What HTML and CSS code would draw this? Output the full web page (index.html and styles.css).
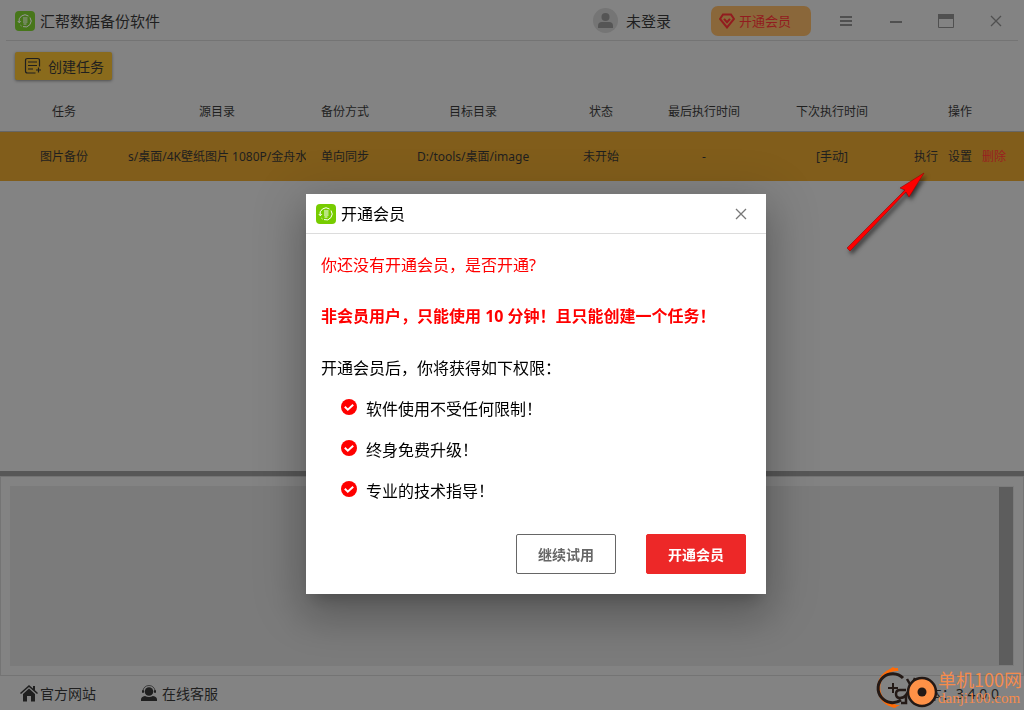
FILE: index.html
```
<!DOCTYPE html>
<html lang="zh-CN">
<head>
<meta charset="utf-8">
<title>汇帮数据备份软件</title>
<link rel="stylesheet" href="styles.css">
</head>
<body>
<svg class="defs" aria-hidden="true">
  <symbol id="logo" viewBox="0 0 20 20">
    <rect width="20" height="20" rx="4" fill="currentColor"/>
    <g fill="none" stroke="var(--logo-line)" stroke-width="1">
      <path d="M4.200 11.500A6 6 0 0 1 13.500 5M15 6.500A6 6 0 0 1 8 15.600M5.500 14.200l1 .8"/>
      <path d="M2.800 10l1.500 1.800 1.600-1.600M8 7h4.500M8 9h4.500M8 11h4.500M8.500 13h3"/>
    </g>
  </symbol>
  <symbol id="close" viewBox="0 0 12 12">
    <path d="M1 1l10 10M11 1L1 11" fill="none" stroke="currentColor" stroke-width="1.300"/>
  </symbol>
  <symbol id="check" viewBox="0 0 16 16">
    <circle cx="8" cy="8" r="8" fill="currentColor"/>
    <path d="M3.800 7.800l3 2.900 5.400-5" fill="none" stroke="#fff" stroke-width="2"/>
  </symbol>
</svg>

<div class="app">
  <header class="titlebar">
    <svg class="logo logo-dim"><use href="#logo"/></svg>
    <h1 class="app-name">汇帮数据备份软件</h1>
    <button class="account">
      <svg width="25" height="25" viewBox="0 0 25 25"><circle cx="12.500" cy="12.500" r="12.500" fill="#757575"/><circle cx="12.500" cy="9" r="4" fill="#555"/><path d="M5 20v-2q0-4 4-4h7q4 0 4 4v2z" fill="#555"/></svg>
      未登录
    </button>
    <button class="vip">
      <svg width="16" height="16" viewBox="0 0 16 16" fill="none" stroke="currentColor" stroke-width="2"><path d="M4 1.500h8L15 6l-7 8.500L1 6z"/><path d="M5 5.800l3 3.400 3-3.400"/></svg>
      开通会员
    </button>
    <div class="window-buttons">
      <button class="win-btn" aria-label="菜单"><svg width="12" height="12" viewBox="0 0 12 12" fill="currentColor"><path d="M0 1h12v2H0zM0 5h12v2H0zM0 9h12v2H0z"/></svg></button>
      <button class="win-btn" aria-label="最小化"><svg width="12" height="12" viewBox="0 0 12 12"><path d="M0 6h12v2H0z" fill="currentColor"/></svg></button>
      <button class="win-btn" aria-label="最大化"><svg width="16" height="14" viewBox="0 0 16 14"><path d="M.5.5h15v13H.5z" fill="none" stroke="currentColor"/><path d="M0 0h16v5H0z" fill="currentColor"/></svg></button>
      <button class="win-btn" aria-label="关闭"><svg width="12" height="12"><use href="#close"/></svg></button>
    </div>
  </header>

  <div class="toolbar">
    <button class="create">
      <svg width="18" height="18" viewBox="0 0 18 18" fill="none" stroke="currentColor" stroke-width="1.200"><path d="M15.500 9.500V3.500q0-2-2-2H3.500q-2 0-2 2v10.500q0 2 2 2h8M4 5h9M4 8.500h9M4 12h5M14.500 10.500v5M12 13h5"/></svg>
      创建任务
    </button>
  </div>

  <main class="tasks">
    <table class="task-table">
      <colgroup><col class="w-m"><col class="w-l"><col class="w-s"><col class="w-l"><col class="w-s"><col class="w-m"><col class="w-m"><col class="w-m"></colgroup>
      <thead>
        <tr><th>任务</th><th>源目录</th><th>备份方式</th><th>目标目录</th><th>状态</th><th>最后执行时间</th><th>下次执行时间</th><th>操作</th></tr>
      </thead>
      <tbody>
        <tr>
          <td>图片备份</td><td class="path">s/桌面/4K壁纸图片 1080P/金舟水</td><td>单向同步</td><td>D:/tools/桌面/image</td><td>未开始</td><td>-</td><td>[手动]</td>
          <td><div class="actions"><button>执行</button><button>设置</button><button class="danger">删除</button></div></td>
        </tr>
      </tbody>
    </table>
  </main>

  <div class="splitter"></div>
  <section class="log-panel"><div class="log"><div class="scrollbar"></div></div></section>

  <footer class="footer">
    <a class="foot-link" href="#">
      <svg width="18" height="17" viewBox="0 0 18 17" fill="currentColor"><path d="M9 0L0 8l1 1 8-7 8 7 1-1-3-2.800V1h-2v2.500z"/><path d="M9 3.500L3 9v7.500h4V11h4v5.500h4V9z"/></svg>
      官方网站
    </a>
    <a class="foot-link support" href="#">
      <svg width="16" height="17" viewBox="0 0 16 17" fill="currentColor"><circle cx="8" cy="6.500" r="4.300"/><path d="M0 16v-1.500q0-3 4-3.500 4 2 8 0 4 .5 4 3.500V16z"/><path d="M2 6a6 5.500 0 0 1 12 0" fill="none" stroke="currentColor" stroke-width=".7"/><rect x="1" y="5" width="2" height="3" rx="1"/><rect x="13" y="5" width="2" height="3" rx="1"/></svg>
      在线客服
    </a>
    <span class="version">版本：3.4.0.0</span>
  </footer>
</div>

<svg class="arrow" width="90" height="90" viewBox="0 0 90 90" aria-hidden="true"><path d="M5 87L2 84 60 26l-5-2 24-15-15 24-3-5z" fill="#f00" stroke="#900" stroke-width=".6"/></svg>

<div class="watermark" aria-hidden="true">
  <svg width="64" height="44" viewBox="0 0 64 44" fill="none">
    <path d="M24 3.500A18 18 0 0 0 22 40" stroke="#ff6b08" stroke-width="3"/>
    <path d="M13 5l6-4 6 4zM14 39l6 3 6-3z" fill="#ff6b08"/>
    <path d="M29 12A14.500 14.500 0 1 0 27 34" stroke="#231916" stroke-width="3"/>
    <path d="M19 17v10M14 22h10" stroke="#231916" stroke-width="2"/>
    <path d="M32 24h-6q-4 0-4 4t4 4 6-3v8h-5M33 13l4 7M41 12l-5 11" stroke="#231916" stroke-width="2.500"/>
    <circle cx="48" cy="26" r="14" fill="#ff9147" stroke="#231916" stroke-width="2.500"/>
    <circle cx="48" cy="26" r="4.500" fill="#231916"/>
  </svg>
  <div class="wm-text"><span class="wm-name">单机100网</span><span class="wm-url">danji100.com</span></div>
</div>

<div class="overlay">
  <div class="dialog" role="dialog" aria-modal="true" aria-labelledby="dialog-title">
    <div class="dialog-head">
      <svg class="logo"><use href="#logo"/></svg>
      <h2 id="dialog-title">开通会员</h2>
      <button class="dialog-close" aria-label="关闭"><svg width="12" height="12"><use href="#close"/></svg></button>
    </div>
    <div class="dialog-body">
      <p class="ask">你还没有开通会员，是否开通?</p>
      <p class="warn">非会员用户，只能使用 10 分钟！且只能创建一个任务！</p>
      <p class="lead">开通会员后，你将获得如下权限：</p>
      <ul class="perks">
        <li><svg class="tick"><use href="#check"/></svg>软件使用不受任何限制！</li>
        <li><svg class="tick"><use href="#check"/></svg>终身免费升级！</li>
        <li><svg class="tick"><use href="#check"/></svg>专业的技术指导！</li>
      </ul>
    </div>
    <div class="dialog-foot">
      <button class="btn">继续试用</button>
      <button class="btn primary">开通会员</button>
    </div>
  </div>
</div>
</body>
</html>
```
FILE: styles.css
```
* { box-sizing: border-box; }
body {
  margin: 0;
  font-family: "Noto Sans", "Noto Sans CJK SC", sans-serif;
  font-size: 12px;
  color: #1f1f1f;
  background: #838383;
}
button { font: inherit; color: inherit; background: none; border: 0; padding: 0; }
h1, h2, p, ul { margin: 0; padding: 0; font-weight: 400; }
svg { display: block; flex: none; }
.defs { position: absolute; width: 0; height: 0; }

.app { display: flex; flex-direction: column; height: 100vh; }

.titlebar {
  display: flex;
  align-items: center;
  height: 41px;
  margin: 0 6px;
  padding: 1px 0 0 9px;
  border-bottom: 1px solid #747474;
}
.logo { width: 20px; height: 20px; color: #7c0; --logo-line: #fff; }
.logo-dim { color: #47761a; --logo-line: #999; }
.app-name { margin-left: 5px; font-size: 15px; line-height: 24px; }
.account { display: flex; align-items: center; gap: 8px; margin-left: auto; font-size: 15px; line-height: 24px; }
.vip {
  display: flex;
  align-items: center;
  gap: 4px;
  width: 100px;
  height: 30px;
  margin-left: 40px;
  padding-left: 8px;
  border-radius: 7px;
  background: #8a673a;
  color: #921c1f;
  font-size: 13px;
}
.window-buttons { display: flex; margin-left: 10px; margin-right: -3px; }
.win-btn { display: grid; place-items: center; width: 50px; height: 39px; color: #505050; }

.toolbar { padding: 11px 15px 12px; }
.create {
  display: flex;
  align-items: center;
  gap: 6px;
  height: 28px;
  padding: 0 8px 0 9px;
  border-radius: 2px;
  background: #8a6b1c;
  box-shadow: 0 1px 3px rgba(0, 0, 0, .4);
  font-size: 14px;
}

.tasks { flex: 1; min-height: 0; }
.task-table { width: 100%; table-layout: fixed; border-collapse: collapse; text-align: center; }
.w-m { width: 12.5%; }
.w-l { width: 17.4%; }
.w-s { width: 7.6%; }
.task-table th { height: 39px; padding: 0; font-weight: 400; border-bottom: 1px solid #666; }
.task-table td { height: 50px; padding: 0; background: #815d1b; white-space: nowrap; overflow: hidden; }
.task-table .path { text-align: left; }
.actions { display: flex; justify-content: center; gap: 10px; }
.danger { color: #9a2020; }

.splitter { height: 5px; background: #575757; }
.log-panel { height: 200px; padding: 9px; border: 1px solid #747474; }
.log { display: flex; justify-content: flex-end; height: 100%; padding: 1px; background: #7b7b7b; }
.scrollbar { width: 14px; background: #5d5d5d; }

.footer { display: flex; align-items: center; height: 34px; padding: 0 25px 0 20px; font-size: 14px; }
.foot-link { display: flex; align-items: center; gap: 2px; color: inherit; text-decoration: none; }
.support { gap: 5px; margin-left: 45px; }
.version { margin-left: auto; }

.arrow { position: absolute; left: 845px; top: 164px; filter: drop-shadow(2px 3px 2px rgba(0, 0, 0, .6)); }

.watermark { position: absolute; right: 2px; bottom: 0; display: flex; align-items: center; color: #f58b4c; }
.wm-text { display: flex; flex-direction: column; }
.wm-name { font-family: "Noto Sans CJK SC", sans-serif; font-size: 18px; line-height: 20px; }
.wm-url { font-family: "Liberation Serif", serif; font-size: 15px; line-height: 18px; }

.overlay {
  position: fixed;
  inset: 0;
  display: flex;
  align-items: center;
  justify-content: center;
  padding: 78px 0 0 48px;
}
.dialog {
  width: 460px;
  background: #fff;
  color: #000;
  box-shadow: 0 11px 15px -7px rgba(0, 0, 0, .2), 0 24px 38px 3px rgba(0, 0, 0, .14), 0 9px 46px 8px rgba(0, 0, 0, .16);
}
.dialog-head { display: flex; align-items: center; height: 40px; padding-left: 10px; border-bottom: 1px solid #dcdcdc; }
.dialog-head h2 { margin-left: 5px; font-size: 16px; line-height: 24px; }
.dialog-close { display: grid; place-items: center; width: 50px; height: 39px; margin-left: auto; color: #777; }
.dialog-body { padding: 19px 15px 0; font-size: 16px; line-height: 24px; }
.ask { color: #f00; }
.warn { margin-top: 27px; color: #f00; font-weight: 700; }
.lead { margin-top: 28px; }
.perks { padding-left: 20px; list-style: none; }
.perks li { display: flex; align-items: center; gap: 9px; margin-top: 17px; }
.tick { width: 16px; height: 16px; margin-bottom: 4px; color: #f00; }
.dialog-foot { display: flex; justify-content: flex-end; gap: 30px; padding: 31px 20px 20px; }
.btn {
  width: 100px;
  height: 40px;
  border: 1px solid #666;
  border-radius: 2px;
  color: #666;
  font-size: 14px;
  font-weight: 700;
}
.primary { border-color: #ed2828; background: #ed2828; color: #fff; }
```
